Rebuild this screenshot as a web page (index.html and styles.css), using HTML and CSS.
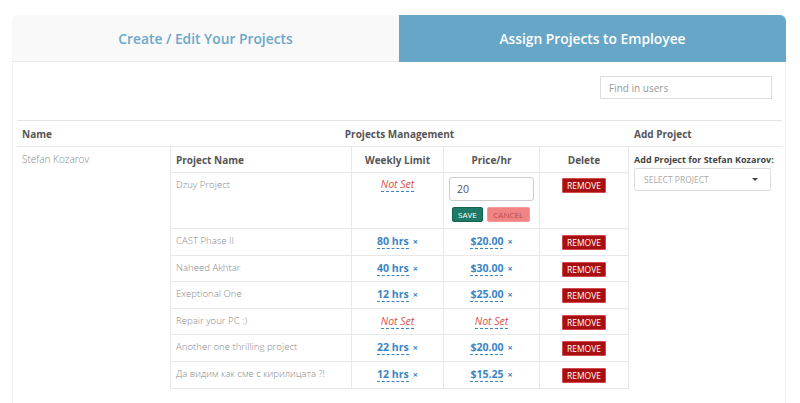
FILE: index.html
```html
<!doctype html>
<html>
<head>
  <meta charset="utf-8">
  <title>Assign Projects to Employee</title>
  <link rel="stylesheet" href="styles.css">
</head>
<body>
  <div class="tabs">
    <a href="#" class="tab">Create / Edit Your Projects</a>
    <a href="#" class="tab tab-active">Assign Projects to Employee</a>
  </div>
  <div class="panel">
    <div class="toolbar">
      <input type="text" class="search" placeholder="Find in users">
    </div>
    <table class="users">
      <thead>
        <tr>
          <th class="col-name">Name</th>
          <th class="col-mgmt">Projects Management</th>
          <th class="col-add">Add Project</th>
        </tr>
      </thead>
      <tbody>
        <tr>
          <td class="user-name">Stefan Kozarov</td>
          <td class="mgmt">
            <table class="projects">
              <thead>
                <tr>
                  <th class="p-name">Project Name</th>
                  <th class="p-limit">Weekly Limit</th>
                  <th class="p-price">Price/hr</th>
                  <th class="p-del">Delete</th>
                </tr>
              </thead>
              <tbody>
                <tr class="editing">
                  <td>Dzuy Project</td>
                  <td class="c"><a href="#" class="editable empty">Not Set</a></td>
                  <td class="c">
                    <input type="text" class="edit-input" value="20">
                    <div class="edit-btns">
                      <button class="btn-save">SAVE</button>
                      <button class="btn-cancel">CANCEL</button>
                    </div>
                  </td>
                  <td class="c"><button class="btn-remove">REMOVE</button></td>
                </tr>
                <tr>
                  <td>CAST Phase II</td>
                  <td class="c"><a href="#" class="editable">80 hrs</a><span class="x">×</span></td>
                  <td class="c"><a href="#" class="editable">$20.00</a><span class="x">×</span></td>
                  <td class="c"><button class="btn-remove">REMOVE</button></td>
                </tr>
                <tr>
                  <td>Naheed Akhtar</td>
                  <td class="c"><a href="#" class="editable">40 hrs</a><span class="x">×</span></td>
                  <td class="c"><a href="#" class="editable">$30.00</a><span class="x">×</span></td>
                  <td class="c"><button class="btn-remove">REMOVE</button></td>
                </tr>
                <tr>
                  <td>Exeptional One</td>
                  <td class="c"><a href="#" class="editable">12 hrs</a><span class="x">×</span></td>
                  <td class="c"><a href="#" class="editable">$25.00</a><span class="x">×</span></td>
                  <td class="c"><button class="btn-remove">REMOVE</button></td>
                </tr>
                <tr>
                  <td>Repair your PC :)</td>
                  <td class="c"><a href="#" class="editable empty">Not Set</a></td>
                  <td class="c"><a href="#" class="editable empty">Not Set</a></td>
                  <td class="c"><button class="btn-remove">REMOVE</button></td>
                </tr>
                <tr>
                  <td>Another one thrilling project</td>
                  <td class="c"><a href="#" class="editable">22 hrs</a><span class="x">×</span></td>
                  <td class="c"><a href="#" class="editable">$20.00</a><span class="x">×</span></td>
                  <td class="c"><button class="btn-remove">REMOVE</button></td>
                </tr>
                <tr>
                  <td>Да видим как сме с кирилицата ?!</td>
                  <td class="c"><a href="#" class="editable">12 hrs</a><span class="x">×</span></td>
                  <td class="c"><a href="#" class="editable">$15.25</a><span class="x">×</span></td>
                  <td class="c"><button class="btn-remove">REMOVE</button></td>
                </tr>
              </tbody>
            </table>
          </td>
          <td class="add">
            <div class="add-label">Add Project for Stefan Kozarov:</div>
            <div class="select">
              <span>SELECT PROJECT</span>
              <span class="caret"></span>
            </div>
          </td>
        </tr>
      </tbody>
    </table>
  </div>
</body>
</html>
```
FILE: styles.css
```css
* { box-sizing: border-box; }
body {
  margin: 0;
  padding: 15px 14px 0 12px;
  font-family: "Open Sans", "Noto Sans CJK SC", sans-serif;
  color: #555;
  background: #fff;
}

.tabs { display: flex; }
.tab {
  flex: 1;
  height: 47px;
  display: flex;
  align-items: center;
  justify-content: center;
  text-decoration: none;
  font-size: 13.8px;
  font-weight: 600;
  color: #6ba7c9;
  background: #f9f9f9;
  border-radius: 6px 0 0 0;
  border-bottom: 1px solid #e8e8e8;
}
.tab-active {
  color: #fff;
  background: #68a6c8;
  border-radius: 0 6px 0 0;
  border-bottom: 1px solid #68a6c8;
}

.panel {
  border: 1px solid #eee;
  border-top: 0;
  border-bottom: 0;
  padding: 0 3px 0 4px;
  height: 345px;
}
.toolbar {
  display: flex;
  justify-content: flex-end;
  padding: 14px 10px 21px 0;
}
.search {
  width: 172px;
  height: 23px;
  border: 1px solid #ddd;
  padding: 0 8px;
  font-family: inherit;
  font-size: 10px;
  color: #555;
}
.search::placeholder { color: #999; }

table { border-collapse: collapse; }
.users { width: 765px; font-size: 10px; }
.users > thead > tr > th {
  border-top: 1px solid #e5e5e5;
  border-bottom: 1px solid #e8e8e8;
  height: 26px;
  padding: 0 5px;
  font-weight: 700;
  color: #555;
  text-align: left;
}
.users .col-name { width: 153px; }
.users .col-mgmt { text-align: center; }
.users .col-add { width: 153px; }
.users > tbody > tr > td { vertical-align: top; padding: 0; }
.user-name {
  padding: 5px 5px !important;
  font-weight: 300;
  color: #888;
}
.add { padding: 5px 5px !important; }
.add-label {
  font-weight: 700;
  font-size: 9px;
  color: #444;
  white-space: nowrap;
  margin: 1px 0 2px;
}
.select {
  width: 137px;
  height: 23px;
  border: 1px solid #ddd;
  border-radius: 2px;
  display: flex;
  align-items: center;
  justify-content: space-between;
  padding: 0 12px 0 9px;
  font-size: 8.5px;
  color: #aaa;
}
.caret {
  border-left: 3px solid transparent;
  border-right: 3px solid transparent;
  border-top: 3px solid #444;
}

.projects { width: 459px; margin-top: -1px; }
.projects th, .projects td {
  border: 1px solid #e8e8e8;
}
.projects th {
  height: 26px;
  padding: 0 5px;
  font-weight: 700;
  color: #555;
  text-align: center;
  font-size: 10px;
}
.projects th.p-name { text-align: left; width: 181px; }
.projects th.p-limit { width: 92px; }
.projects th.p-price { width: 95px; }
.projects td {
  height: 26.6px;
  vertical-align: top;
  font-weight: 300;
  color: #888;
  font-size: 9.6px;
  padding: 5px 5px 0;
}
.projects td.c { text-align: center; }
.editing td { height: 56px; }

.editable {
  color: #3a85c6;
  font-weight: 700;
  text-decoration: none;
  border-bottom: 1px dashed #3a85c6;
  font-size: 10.5px;
}
.editable.empty {
  color: #d9534f;
  font-weight: 400;
  font-style: italic;
}
.x {
  color: #3a85c6;
  font-weight: 700;
  font-size: 9px;
  margin-left: 4px;
}

.btn-remove {
  background: #a80f12;
  border: 1px solid #d34a4a;
  color: #fff;
  font-family: inherit;
  font-size: 8.5px;
  padding: 0 4px;
  height: 15px;
  margin-top: 1px;
  border-radius: 1px;
}
.editing td.c { padding-top: 4px; }
.editing .btn-remove { margin-top: 1px; }
.edit-input {
  display: block;
  width: 85px;
  height: 24px;
  margin: 0 0 6px 0;
  border: 1px solid #ccc;
  border-radius: 3px;
  padding: 0 7px;
  font-family: inherit;
  font-size: 10.5px;
  color: #555;
}
.edit-btns { display: flex; gap: 4px; padding-left: 3px; }
.edit-btns button {
  font-family: inherit;
  font-size: 8px;
  height: 15px;
  padding: 0 5px;
  border-radius: 2px;
}
.btn-save {
  background: #1d7a66;
  border: 1px solid #15614f;
  color: #fff;
}
.btn-cancel {
  background: #f08383;
  border: 1px solid #f39a9a;
  color: #b84c4c;
  width: 43px;
}
```
